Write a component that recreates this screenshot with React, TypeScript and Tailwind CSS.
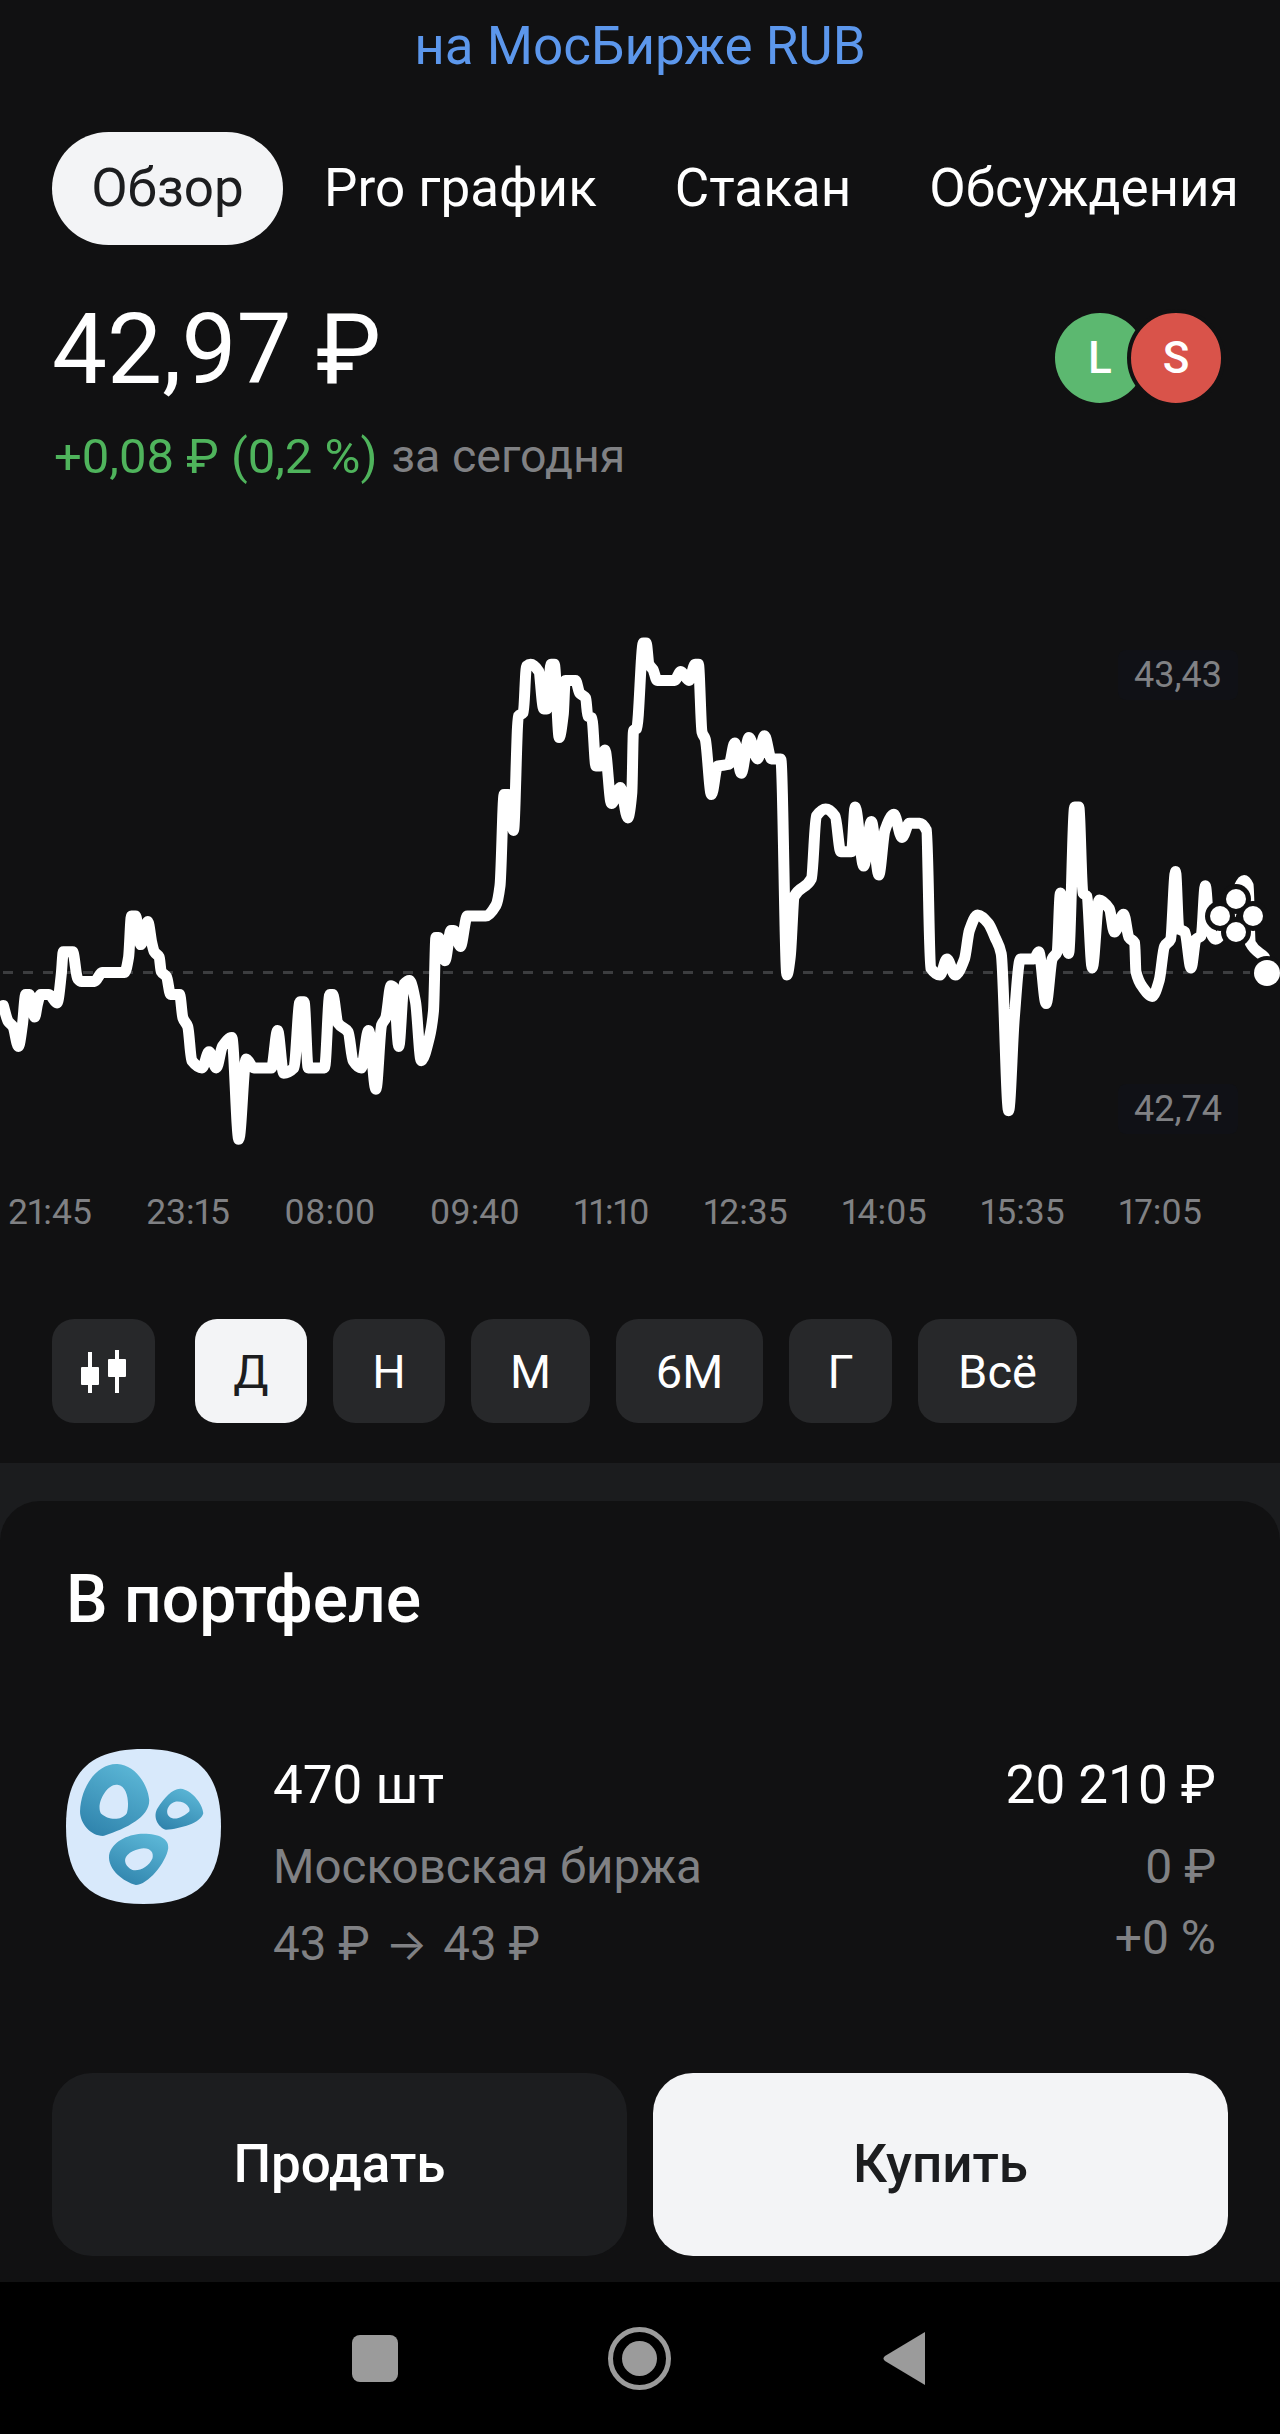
const leftPts = [
  [8, 1135], [20, 1180], [32, 1195], [45, 1250], [55, 1190], [63, 1105], [72, 1105], [85, 1168], [92, 1130], [100, 1105],
  [120, 1105], [140, 1128], [150, 1050], [155, 985], [178, 985], [190, 1060], [200, 1068], [232, 1068], [250, 1043], [305, 1043],
  [315, 1000], [322, 885], [332, 885], [345, 965], [362, 900], [372, 960], [378, 985], [390, 1000], [395, 1040], [408, 1055],
  [418, 1105], [440, 1105], [448, 1170], [460, 1195], [470, 1290], [495, 1310], [512, 1265], [530, 1310], [545, 1250], [568, 1225],
  [585, 1510], [603, 1285], [622, 1310], [665, 1310], [680, 1205], [695, 1325], [720, 1310], [735, 1125], [745, 1125], [755, 1310],
  [795, 1310], [808, 1105], [815, 1105], [828, 1185], [853, 1210], [865, 1290], [885, 1310], [903, 1205], [921, 1370], [935, 1190],
  [945, 1170], [958, 1080], [965, 1085], [977, 1250], [990, 1075], [1003, 1065], [1018, 1125], [1032, 1290], [1052, 1225], [1062, 1150],
  [1068, 945], [1075, 945], [1090, 1010], [1105, 925], [1112, 925], [1128, 970], [1145, 885], [1190, 885], [1215, 855], [1225, 800],
  [1235, 545], [1245, 545], [1258, 645], [1270, 325], [1282, 315], [1290, 185], [1300, 180], [1320, 200], [1332, 305], [1340, 305],
  [1350, 180], [1358, 180], [1370, 385], [1380, 320], [1385, 225], [1410, 225], [1420, 260], [1435, 275], [1440, 325], [1450, 330],
  [1460, 465], [1470, 465], [1482, 420], [1498, 570], [1520, 525], [1538, 610], [1548, 540], [1552, 365], [1560, 360],
];

const rightPts = [
  [8, 120], [15, 120], [22, 180], [32, 195], [42, 225], [85, 225], [100, 200], [120, 225], [135, 180], [143, 180],
  [152, 370], [160, 390], [175, 545], [190, 465], [218, 460], [232, 400], [248, 485], [267, 385], [288, 445], [305, 380],
  [322, 445], [345, 445], [360, 1050], [368, 1000], [378, 830], [420, 780], [432, 605], [455, 585], [478, 605], [492, 705],
  [518, 705], [527, 580], [548, 745], [567, 620], [585, 770], [600, 645], [622, 600], [642, 665], [660, 625], [685, 625],
  [702, 645], [712, 1030], [735, 1050], [752, 1005], [772, 1050], [795, 1005], [807, 925], [827, 882], [853, 905], [870, 945],
  [885, 990], [903, 1430], [917, 1170], [932, 1005], [965, 1005], [977, 985], [995, 1130], [1010, 1005], [1022, 985], [1030, 820],
  [1050, 990], [1065, 580], [1075, 580], [1085, 820], [1095, 830], [1108, 1030], [1125, 840], [1150, 865], [1162, 930], [1185, 880],
  [1198, 945], [1212, 960], [1215, 1040], [1232, 1085], [1255, 1110], [1272, 1065], [1285, 970], [1300, 950], [1312, 760], [1320, 920],
  [1335, 930], [1350, 1030], [1362, 950], [1375, 940], [1385, 800], [1395, 920], [1410, 950], [1440, 900], [1480, 785], [1490, 800],
  [1495, 960], [1530, 1000],
];

// crop coordinates of the reference -> page coordinates
const chartPoints = [
  ...leftPts.map(([x, y]) => [x / 2.45, 600 + y / 2.8]),
  ...rightPts.map(([x, y]) => [640 + x / 2.45, 600 + y / 2.8]),
];

// monotone cubic, so the spikes keep their round tops
function monotonePath(pts: number[][]) {
  const slopes = pts.slice(1).map(([x, y], i) => (y - pts[i][1]) / (x - pts[i][0]));
  const tangents = pts.map((_, i) => {
    if (i === 0) return slopes[0];
    if (i === pts.length - 1) return slopes[i - 1];
    const a = slopes[i - 1];
    const b = slopes[i];
    return a * b <= 0 ? 0 : (2 * a * b) / (a + b);
  });
  let d = `M${pts[0][0].toFixed(1)} ${pts[0][1].toFixed(1)}`;
  for (let i = 0; i < pts.length - 1; i++) {
    const [x0, y0] = pts[i];
    const [x1, y1] = pts[i + 1];
    const h = (x1 - x0) / 3;
    d += ` C${(x0 + h).toFixed(1)} ${(y0 + tangents[i] * h).toFixed(1)} ${(x1 - h).toFixed(1)} ${(y1 - tangents[i + 1] * h).toFixed(1)} ${x1.toFixed(1)} ${y1.toFixed(1)}`;
  }
  return d;
}

const chartPath = monotonePath(chartPoints);

const clusterDots = [
  [1220, 916],
  [1236, 899],
  [1253, 916],
  [1236, 932],
];

const times = ["21:45", "23:15", "08:00", "09:40", "11:10", "12:35", "14:05", "15:35", "17:05"];
const ranges = [
  { label: "Д", w: "w-[112px]", active: true },
  { label: "Н", w: "w-[112px]", active: false },
  { label: "М", w: "w-[119px]", active: false },
  { label: "6М", w: "w-[147px]", active: false },
  { label: "Г", w: "w-[103px]", active: false },
  { label: "Всё", w: "w-[159px]", active: false },
];

function Chart() {
  return (
    <div className="relative mt-[113px] h-[580px]">
      <svg className="block" width="1280" height="580" viewBox="0 600 1280 580">
        <line x1="3" y1="972.5" x2="1280" y2="972.5" stroke="#3c3d3f" strokeWidth="3" strokeDasharray="10 10" />
        <path d={chartPath} fill="none" stroke="#ffffff" strokeWidth="11" strokeLinejoin="round" strokeLinecap="round" />
        {clusterDots.map(([x, y]) => (
          <circle key={`bg-${x}-${y}`} cx={x} cy={y} r="15" fill="#111112" />
        ))}
        {clusterDots.map(([x, y]) => (
          <circle key={`${x}-${y}`} cx={x} cy={y} r="10" fill="#ffffff" />
        ))}
        <circle cx="1267" cy="973" r="17" fill="#111112" />
        <circle cx="1267" cy="973" r="13" fill="#ffffff" />
      </svg>
      <div className="absolute right-[42px] top-[50px] rounded-lg bg-[#101116] px-4 text-[36px] leading-[50px] text-[#808184]">43,43</div>
      <div className="absolute right-[42px] top-[484px] rounded-lg bg-[#101116] px-4 text-[36px] leading-[50px] text-[#808184]">42,74</div>
    </div>
  );
}

function MoexLogo() {
  return (
    <svg width="155" height="155" viewBox="196 148 464 464" className="shrink-0">
      <defs>
        <linearGradient id="blob" x1="0.7" y1="0" x2="0.2" y2="1">
          <stop offset="0" stopColor="#5bb6d6" />
          <stop offset="1" stopColor="#2f83ac" />
        </linearGradient>
      </defs>
      <path
        d="M428 148C590 148 660 218 660 380C660 542 590 612 428 612C266 612 196 542 196 380C196 218 266 148 428 148Z"
        fill="#d8e9fb"
      />
      <path
        fillRule="evenodd"
        fill="url(#blob)"
        d="M350 193C400 195 440 250 445 300C448 350 380 385 310 408C270 410 238 370 238 335C240 260 290 190 350 193ZM350 255C320 250 285 310 300 340C320 360 360 365 378 340C385 320 385 260 350 255Z"
      />
      <path
        fillRule="evenodd"
        fill="url(#blob)"
        d="M540 267C570 270 605 310 607 340C600 370 540 385 495 390C470 380 455 350 470 325C490 295 515 265 540 267ZM530 305C505 305 490 335 505 350C520 365 550 350 565 335C570 325 555 305 530 305Z"
      />
      <path
        fillRule="evenodd"
        fill="url(#blob)"
        d="M420 402C470 400 505 415 502 445C495 490 440 555 405 555C370 545 320 510 325 465C335 425 380 405 420 402ZM415 447C400 450 390 455 380 465C365 480 375 500 395 510C415 515 445 500 455 475C460 455 445 440 415 447Z"
      />
    </svg>
  );
}

export default function App() {
  return (
    <div className="flex h-[2434px] w-full flex-col overflow-hidden bg-[#111112] font-['Roboto',sans-serif] text-white">
      <div className="flex h-[94px] items-center justify-center text-[53px] text-[#5c97ec]">на МосБирже RUB</div>

      <div className="mt-[38px] flex h-[113px] items-center whitespace-nowrap pl-[52px] text-[53px]">
        <div className="flex h-[113px] w-[231px] items-center justify-center rounded-full bg-[#f3f4f6] text-[#1c1d1f]">Обзор</div>
        <div className="ml-[41px] flex gap-[78px]">
          <span>Pro график</span>
          <span>Стакан</span>
          <span>Обсуждения</span>
        </div>
      </div>

      <div className="mt-[50px] flex h-[110px] items-center justify-between pl-[52px] pr-[55px]">
        <div className="text-[98px] leading-[110px]">42,97 ₽</div>
        <div className="mt-[16px] flex items-center text-[44px] font-medium">
          <div className="flex h-[90px] w-[90px] items-center justify-center rounded-full bg-[#5cb870]">L</div>
          <div className="-ml-[18px] flex h-[98px] w-[98px] items-center justify-center rounded-full border-4 border-[#111112] bg-[#d9534a]">S</div>
        </div>
      </div>

      <div className="mt-[22px] flex h-[60px] items-center gap-[14px] pl-[54px]">
        <span className="text-[49px] text-[#4fb45c]">+0,08 ₽ (0,2 %)</span>
        <span className="text-[46.500px] text-[#808184]">за сегодня</span>
      </div>

      <Chart />

      <div className="mt-[8px] flex h-[50px] items-center justify-between pl-[8px] pr-[78px] text-[35.500px] text-[#808184] proportional-nums">
        {times.map((t) => (
          <span key={t}>{t}</span>
        ))}
      </div>

      <div className="mt-[81px] flex h-[104px] items-stretch pl-[52px] text-[47px]">
        <div className="mr-[40px] flex w-[103px] items-center justify-center rounded-[22px] bg-[#27282a]">
          <svg width="45" height="43" viewBox="82 1350 45 43">
            <rect x="89" y="1352" width="4" height="41" fill="#ffffff" />
            <rect x="82" y="1367" width="18" height="18" rx="1" fill="#ffffff" />
            <rect x="116" y="1350" width="4" height="43" fill="#ffffff" />
            <rect x="109" y="1359" width="18" height="18" rx="1" fill="#ffffff" />
          </svg>
        </div>
        <div className="flex gap-[26px]">
          {ranges.map((r) => (
            <div
              key={r.label}
              className={`flex items-center justify-center rounded-[22px] pt-[2px] ${r.w} ${r.active ? "bg-[#f3f4f6] text-[#1c1d1f]" : "bg-[#27282a] text-white"}`}
            >
              {r.label}
            </div>
          ))}
        </div>
      </div>

      <div className="mt-[40px] bg-[#1b1c1e] pt-[38px]">
        <div className="flex h-[781px] flex-col rounded-t-[40px] bg-[#111112] px-[66px] pt-[64px]">
          <div className="h-[70px] text-[66px] font-medium leading-[70px]">В портфеле</div>

          <div className="mt-[114px] flex h-[240px] items-start">
            <MoexLogo />
            <div className="ml-[52px] mt-[6px] flex flex-col text-[47.500px] leading-[60px] text-[#808184]">
              <span className="text-[53px] text-white">470 шт</span>
              <span className="mt-[22px]">Московская биржа</span>
              <span className="mt-[17px]">
                43 ₽ <span className="mx-[4px] font-['Inter',sans-serif] text-[44px]">→</span> 43 ₽
              </span>
            </div>
            <div className="-mr-[2px] ml-auto mt-[6px] flex flex-col items-end text-[48px] leading-[60px] text-[#808184]">
              <span className="text-[53px] text-white">20 210 ₽</span>
              <span className="mt-[22px]">0 ₽</span>
              <span className="mt-[11px]">+0 %</span>
            </div>
          </div>

          <div className="-mx-[14px] mt-[84px] flex gap-[26px] text-[53px] font-medium">
            <div className="flex h-[183px] flex-1 items-center justify-center rounded-[40px] bg-[#1c1d1f]">Продать</div>
            <div className="flex h-[183px] flex-1 items-center justify-center rounded-[40px] bg-[#f3f4f6] text-[#1c1d1f]">Купить</div>
          </div>
        </div>
      </div>

      <div className="flex flex-1 items-center bg-black pl-[352px]">
        <div className="h-[47px] w-[46px] rounded-[8px] bg-[#9b9b9b]" />
        <div className="ml-[210px] flex h-[63px] w-[63px] items-center justify-center rounded-full border-[5px] border-[#9b9b9b]">
          <div className="h-[35px] w-[35px] rounded-full bg-[#9b9b9b]" />
        </div>
        <svg className="ml-[212px]" width="42" height="53" viewBox="0 0 42 53">
          <path d="M42 0V53L2 29Q-1 26.500 2 24Z" fill="#9b9b9b" />
        </svg>
      </div>
    </div>
  );
}
